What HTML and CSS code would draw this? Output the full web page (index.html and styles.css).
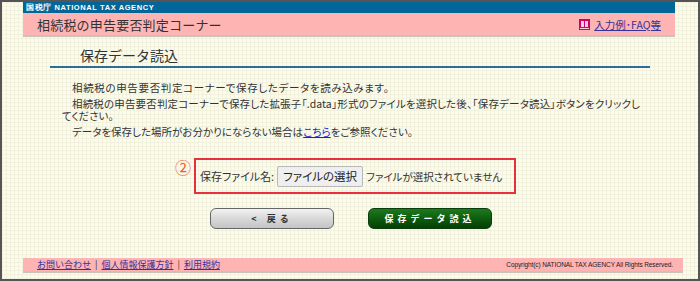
FILE: index.html
```html
<!DOCTYPE html>
<html lang="ja">
<head>
  <meta charset="UTF-8" />
  <title>保存データ読込</title>
  <link rel="stylesheet" href="styles.css">
</head>
<body>
<div class="page">

  <header class="site-header">
    <div class="agency">国税庁 NATIONAL TAX AGENCY</div>
    <div class="corner">
      <span class="corner-title">相続税の申告要否判定コーナー</span>
      <a class="faq" href="#">
        <svg class="faq-icon" width="11" height="11" viewBox="0 0 11 11">
          <rect x="0" y="0" width="11" height="11" fill="#d4006a"/>
          <rect x="2" y="2" width="3" height="6" fill="#ffd0e4"/>
          <rect x="6" y="2" width="3" height="6" fill="#ffd0e4"/>
          <rect x="1" y="9" width="9" height="1" fill="#ffd0e4"/>
        </svg>
        <span>入力例･FAQ等</span>
      </a>
    </div>
  </header>

  <main class="content">
    <h1 class="page-title">保存データ読込</h1>
    <div class="rule"></div>

    <div class="text">
      <p><span class="ln ln1">相続税の申告要否判定コーナーで保存したデータを読み込みます。</span></p>
      <p><span class="ln ln2">相続税の申告要否判定コーナーで保存した拡張子「.data」形式のファイルを選択した後、「保存データ読込」ボタンをクリックし</span><br>てください。</p>
      <p><span class="ln ln3">データを保存した場所がお分かりにならない場合は<a href="#">こちら</a>をご参照ください。</span></p>
    </div>

    <div class="file-area">
      <span class="step">②</span>
      <div class="file-box">
        <span>保存ファイル名:</span>
        <button class="file-btn" type="button">ファイルの選択</button>
        <span class="no-file">ファイルが選択されていません</span>
      </div>
    </div>

    <div class="actions">
      <button class="btn btn-back" type="button">&lt; 戻る</button>
      <button class="btn btn-load" type="button">保存データ読込</button>
    </div>
  </main>

  <footer class="site-footer">
    <div class="links">
      <a href="#">お問い合わせ</a><span class="sep">|</span><a href="#">個人情報保護方針</a><span class="sep">|</span><a href="#">利用規約</a>
    </div>
    <div class="copy">Copyright(c) NATIONAL TAX AGENCY All Rights Reserved.</div>
  </footer>

</div>
</body>
</html>
```

FILE: styles.css
```css
/* page frame */
html, body {
  margin: 0;
  padding: 0;
}

body {
  width: 700px;
  height: 281px;
  overflow: hidden;
  font-family: "Noto Sans CJK JP", "Liberation Sans", sans-serif;
  color: #333;
}

.page {
  box-sizing: border-box;
  height: 281px;
  border: 2px solid #555;
  background-color: #fcfcec;
  background-image:
    linear-gradient(to right, #f1f1de 1px, transparent 1px),
    linear-gradient(to bottom, #f1f1de 1px, transparent 1px);
  background-size: 4px 4px;
  display: flex;
  flex-direction: column;
}

/* header */
.site-header {
  margin-left: 21px;
  width: 652px;
}

.agency {
  height: 11px;
  background: #036699;
  color: #fff;
  font-family: "Liberation Sans", sans-serif;
  font-weight: 700;
  font-size: 7.5px;
  line-height: 11px;
  letter-spacing: 0.6px;
  padding-left: 3px;
}

.corner {
  height: 22px;
  background: #ffb4b4;
  border-bottom: 2px solid #c9c3bb;
  display: flex;
  align-items: center;
  justify-content: space-between;
  padding: 0 14px 0 14px;
}

.corner-title {
  font-size: 13px;
  letter-spacing: 0.2px;
  color: #333;
}

.faq {
  display: flex;
  align-items: center;
  gap: 4px;
  color: #333399;
  font-size: 10.5px;
  text-decoration: underline;
}

/* main */
.content {
  flex: 1;
}

.page-title {
  margin: 8px 0 0 78px;
  font-size: 14px;
  font-weight: 400;
  line-height: 20px;
  color: #333;
}

.rule {
  margin: 1px 0 0 48px;
  width: 600px;
  height: 2px;
  background: #2b6d96;
}

.text {
  margin: 14px 0 0 60px;
  width: 600px;
  font-size: 10.5px;
  line-height: 12.5px;
  font-feature-settings: "palt";
  white-space: nowrap;
}

.text p {
  margin: 0 0 3px 0;
}

/* each first line is stretched to the width it has on the original page */
.ln {
  display: inline-block;
  margin-left: 10px;
  text-align: justify;
  text-align-last: justify;
  white-space: normal;
}

.ln1 { width: 317px; }
.ln2 { width: 568px; }
.ln3 { width: 341px; }

.text a {
  color: #2222cc;
  text-decoration: underline;
}

.file-area {
  display: flex;
  align-items: flex-start;
  margin: 21px 0 0 173px;
}

.step {
  color: #f05a28;
  font-size: 16px;
  line-height: 16px;
  margin-top: 0;
  width: 19px;
}

.file-box {
  display: flex;
  align-items: center;
  gap: 2px;
  box-sizing: border-box;
  width: 322px;
  height: 36px;
  margin-top: -1px;
  padding-left: 4px;
  border: 2px solid #e8303c;
  font-size: 11px;
  font-feature-settings: "palt";
  white-space: nowrap;
  color: #333;
}

.no-file {
  font-size: 10.5px;
}

.file-btn {
  height: 21px;
  padding: 0 5px;
  margin: 0 1px 0 1px;
  font-family: inherit;
  font-size: 11.5px;
  font-feature-settings: "palt";
  color: #222;
  background: #efefef;
  border: 1px solid #b8b8b8;
  border-radius: 2px;
  white-space: nowrap;
}

.actions {
  display: flex;
  gap: 34px;
  margin: 14px 0 0 208px;
}

.btn {
  width: 124px;
  height: 21px;
  border-radius: 6px;
  font-family: inherit;
  font-weight: 700;
  font-size: 9px;
  letter-spacing: 4px;
  padding: 0;
}

.btn-back {
  color: #333;
  border: 1px solid #666;
  background: linear-gradient(to bottom, #f2f2f2, #d6d6d6 55%, #c4c4c4);
}

.btn-load {
  color: #fff;
  border: 1px solid #0b3d0b;
  background: linear-gradient(to bottom, #1d7a1d, #0d5a0d 55%, #063f06);
}

/* footer */
.site-footer {
  margin: 0 0 6px 21px;
  width: 660px;
  height: 15px;
  background: #ffb4b4;
  border-bottom: 2px solid #c9c3bb;
  display: flex;
  align-items: center;
  justify-content: space-between;
  padding: 0 10px 0 14px;
  box-sizing: border-box;
}

.links {
  font-size: 9px;
  color: #333;
}

.links a {
  color: #333399;
  text-decoration: underline;
}

.sep {
  margin: 0 4px;
}

.copy {
  font-family: "Liberation Sans", sans-serif;
  font-size: 6.5px;
  color: #222;
  letter-spacing: -0.1px;
}
```
